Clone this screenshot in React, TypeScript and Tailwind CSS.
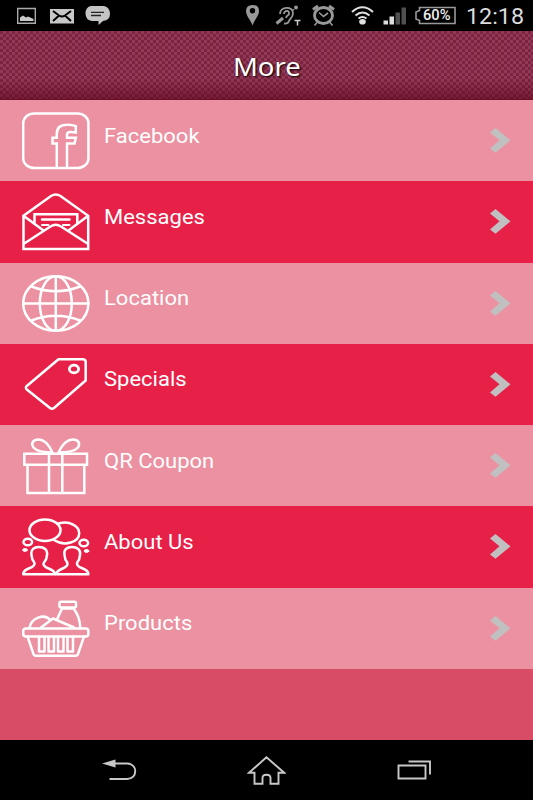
import React from 'react';

const iconProps = {
  fill: 'none',
  stroke: '#fff',
  strokeWidth: 2.5,
  strokeLinejoin: 'round' as const,
  strokeLinecap: 'round' as const,
};

// All row icons share a 68x58 canvas
function Icon({ children }: { children: React.ReactNode }) {
  return (
    <svg className="w-[68px] h-[58px] shrink-0" viewBox="0 0 68 58" {...iconProps}>
      {children}
    </svg>
  );
}

const FacebookIcon = () => (
  <Icon>
    <rect x="1.2" y="1.4" width="65.2" height="54.6" rx="11" ry="9.5" />
    <path strokeLinejoin="miter" d="M34.8 55.5V31.5H30.5V25.8H34.8V22C34.8 15.500 39 12.800 45 12.800Q49.500 12.500 53.800 14.200V20.500C49 19.800 45 19.500 45 22.500V25.800H53.800L52.500 31.500H45V55.500" />
  </Icon>
);

const MessagesIcon = () => (
  <Icon>
    <path strokeLinejoin="miter" d="M1.5 22.8V56H66.2V22.8L38.5 3Q33.7.2 29 3L1.5 22.8L21.500 37.500M66.2 22.8L46.500 37.500M1.5 51L28.5 33.500Q33.7 30 39 33.500L66.2 51" />
    <path strokeLinejoin="miter" d="M12.5 29.5V21.3H55.3V29.5M20 26.5H47.500" />
    <path strokeWidth="2" d="M20 32H26.500M41 32H47.500" />
  </Icon>
);

const LocationIcon = () => (
  <Icon>
    <ellipse cx="33.8" cy="28.5" rx="32.6" ry="27.3" />
    <ellipse cx="33.8" cy="28.5" rx="16" ry="27.3" />
    <path d="M33.8 1.2V55.8M1.2 28.5H66.4M9.500 11.500Q33.8 21 58 11.500M9.500 45.500Q33.8 36 58 45.500" />
  </Icon>
);

const SpecialsIcon = () => (
  <Icon>
    <path d="M36.5 3.3H60.500Q63.7 3.3 63.7 6V24.500L32 52Q30 53.500 28 52L4.8 33.500Q3 31.700 4.8 30Z" />
    <ellipse cx="52" cy="13" rx="4.6" ry="3.9" strokeWidth="2.800" />
  </Icon>
);

const CouponIcon = () => (
  <Icon>
    <path strokeLinejoin="miter" d="M2.3 16.8H65V27.8H2.3ZM5.500 27.8V56H62.300V27.8M27 16.8V56M40.300 16.8V56" />
    <path d="M30.5 15.5C27 8 22 2.5 16.500 2.5C11 2.5 8.500 6.500 11.500 10.500C14.500 14 21 15.500 30.500 15.500ZM36.500 15.500C40 8 45.500 2.500 51 2.500C56.500 2.500 58.500 6.500 56 10.500C53 14 46.500 15.500 36.500 15.500Z" />
  </Icon>
);

const AboutIcon = () => (
  <Icon>
    <ellipse cx="23" cy="12.200" rx="15.500" ry="10.700" />
    <path d="M36.500 5.500C48 2.500 57.200 8 57.200 15.300C57.200 24 43 29 32 22" />
    <ellipse cx="5.800" cy="24" rx="4.300" ry="3.300" />
    <ellipse cx="61.800" cy="25" rx="4.300" ry="3.300" />
    <ellipse cx="3" cy="32" rx="2.300" ry="1.400" fill="#fff" strokeWidth="1" />
    <ellipse cx="64.500" cy="33" rx="2.300" ry="1.400" fill="#fff" strokeWidth="1" />
    <path d="M1.200 56.300C1.200 49 12.500 51.500 12.500 45.500C12.500 43 10 43 10 39.500L9.500 37C8.500 31.500 12 29 17 29C22 29 26 31.500 25 37L24.500 39.500C24.500 43 21.500 43 21.500 46C21.500 51 32.500 50 33.200 56.300Z" />
    <path d="M34.200 56.300C35 50 45.500 51 45.500 46C45.500 43 43 43 43 39.500L42.500 37C41.500 31.500 45 29 50 29C55 29 59 31.500 58 37L57.500 39.500C57.500 43 55 43 55 45.500C55 51.500 66.400 49 66.400 56.300Z" />
  </Icon>
);

const ProductsIcon = () => (
  <Icon>
    <rect x="1.300" y="28.500" width="65" height="8" rx="2.500" />
    <path d="M5.500 36.500L11.500 54Q12 55.800 14 55.800H53.500Q55.500 55.800 56 54L62 36.500M7.500 28C9 18 22 13 28.500 20M19 27.500L31 18.500L52 27.500M35 19.500L40 8.500H51.500C56 14 58 20 58.300 28" />
    <rect x="37.500" y="1.700" width="16.500" height="5.800" rx="1.500" />
    <path d="M17 37V51.500H22.500V37M26.500 37V51.500H32V37M36 37V51.500H41.500V37M45.500 37V51.500H51V37" />
  </Icon>
);

const items = [
  { label: 'Facebook', icon: FacebookIcon },
  { label: 'Messages', icon: MessagesIcon },
  { label: 'Location', icon: LocationIcon },
  { label: 'Specials', icon: SpecialsIcon },
  { label: 'QR Coupon', icon: CouponIcon },
  { label: 'About Us', icon: AboutIcon },
  { label: 'Products', icon: ProductsIcon },
];

function StatusBar() {
  return (
    <div className="h-[31px] bg-black flex items-center justify-between pl-4 pr-[9px]">
      <svg className="w-[96px] h-[31px]" viewBox="16 0 96 31">
        <path d="M17.700 8.500H35.300V23.300H17.700Z" fill="none" stroke="#aaa" strokeWidth="1.400" />
        <path d="M20 21V17.500L23 15.500L26 17.500L28 16.500L33.500 19V21Z" fill="#c8c8c8" />
        <path d="M50 9H74V23.500H50Z" fill="#c8c8c8" />
        <path d="M53 11L59 15.500Q62 17.500 65 15.500L71 11M53 21L58.500 16M71 21L65.500 16" fill="none" stroke="#000" strokeWidth="2" />
        <path d="M91 6H104Q110 7.500 110 14Q110 20 103 21L98.500 25V21H92Q85.500 20 85.500 13.500Q85.500 7 91 6Z" fill="#c4c4c4" />
        <path d="M91 12.300H104M91 15.500H101" stroke="#222" strokeWidth="1.300" />
      </svg>
      <svg className="w-[284px] h-[31px]" viewBox="240 0 284 31" fill="none" stroke="#999">
        <path fill="#999" stroke="none" fillRule="evenodd" d="M252.500 25.500C250.500 19.500 246 16 246 11Q246 5 252.500 5Q259 5 259 11C259 16 254.500 19.500 252.500 25.500ZM252.500 8A2.700 2.700 0 1 0 252.500 13.400A2.700 2.700 0 1 0 252.500 8Z" />
        <path strokeWidth="1.800" d="M280 14C280 6 293 6 293 13C293 18 290 18 289 21Q288 24 284 23.500M284 14C284 9.500 290 10 289 14C288 16 286 16 286 18" />
        <path strokeWidth="3" d="M276.500 23.500L283 18" />
        <circle cx="296" cy="7.500" r="1.900" fill="#999" stroke="none" />
        <path strokeWidth="1.300" d="M292 11L294 9.300" />
        <path stroke="#ccc" strokeWidth="1.500" d="M294.500 20.500H300.500M297.500 20.500V25.500" />
        <ellipse cx="323.500" cy="15.500" rx="9" ry="8" strokeWidth="2.800" />
        <path strokeWidth="1.600" d="M319 12.500L323.500 16.500L328 13M317 22.500L314.500 25.500M330 22.500L332.500 25.500" />
        <path strokeWidth="3" d="M313 9.500L318 6M329 6L334 9.500" />
        <g stroke="#e0e0e0" strokeWidth="2">
          <path d="M352 12Q362.500 2.500 373 12M355.500 15.500Q362.500 9.500 369.500 15.500M358.500 18.500Q362.500 15.500 366.500 18.500" />
          <ellipse cx="362.500" cy="21.700" rx="3.300" ry="2.800" fill="#e0e0e0" stroke="none" />
        </g>
        <g stroke="none">
          <path fill="#ddd" d="M383.500 20.500H388V24.500H383.500ZM389.500 16.500H394V24.500H389.500Z" />
          <path fill="#505050" d="M395.500 12.500H400V24.500H395.500ZM401.500 7.500H406V24.500H401.500Z" />
        </g>
        <path stroke="#999" strokeWidth="1.600" d="M419.500 7.500H455V23.500H419.500V20.500L416 19V12L419.500 10.500Z" />
        <text x="423" y="20.300" textLength="27.500" lengthAdjust="spacingAndGlyphs" fill="#eee" stroke="none" className="font-[Roboto,sans-serif] text-[14px] font-medium">60%</text>
        <text x="466" y="23.700" textLength="58" lengthAdjust="spacingAndGlyphs" fill="#ddd" stroke="none" className="font-[Roboto,sans-serif] text-[22px]">12:18</text>
      </svg>
    </div>
  );
}

function NavBar() {
  return (
    <div className="h-[60px] bg-black flex items-center justify-between pl-[102px] pr-[101px]">
      <svg className="w-[35px] h-[30px]" viewBox="0 0 35 30" fill="none" stroke="#c8c8c8" strokeWidth="1.900">
        <path d="M13 8.500H25C36 8.500 36 24 25 24H7.500" />
        <path d="M0 8.500L13.500 4.500V12.500Z" fill="#c8c8c8" stroke="none" />
      </svg>
      <svg className="w-[39px] h-[30px] -ml-0.5" viewBox="0 0 39 30" fill="none" stroke="#c8c8c8" strokeWidth="1.900">
        <path d="M19.500 2.300L2 17.800H7.500V28.800H15.500V23Q15.500 19.700 19.500 19.700Q23.500 19.700 23.500 23V28.800H31.500V17.800H37.200Z" />
      </svg>
      <svg className="w-[35px] h-[30px]" viewBox="0 0 35 30" fill="none" stroke="#c8c8c8" strokeWidth="1.900">
        <path d="M1.500 10.500H28.500V23.500H1.500ZM11.500 6.500H33V19.500" />
      </svg>
    </div>
  );
}

export default function App() {
  return (
    <div className="w-[533px] h-[800px] flex flex-col overflow-hidden bg-[#d94c66] font-[Roboto,sans-serif]">
      <StatusBar />
      {/* Header with woven texture */}
      <header className="h-[69px] shrink-0 flex items-center justify-center border-b border-[#6b0f28] bg-[linear-gradient(to_bottom,transparent_70%,rgba(90,0,25,0.5)),repeating-conic-gradient(#913a55_0_25%,#7c2341_0_50%)] bg-size-[auto,6px_6px]">
        <h1 className="font-['Noto_Sans',sans-serif] text-[25px] leading-none text-white scale-x-[1.1] pt-0.5 [text-shadow:1px_1px_2px_#000]">More</h1>
      </header>

      <ul className="h-[569px] shrink-0 flex flex-col">
        {items.map(({ label, icon: ItemIcon }) => (
          <li key={label} className="flex-1 flex px-[22px] text-white odd:bg-[#eb91a1] even:bg-[#e72048]">
            <div className="pt-3">
              <ItemIcon />
            </div>
            <span className="flex-1 pl-[14px] pt-[23.5px] text-[20px] leading-6">
              <span className="inline-block origin-left scale-x-[1.1]">{label}</span>
            </span>
            <svg className="w-[22px] h-[26px] mt-[27px]" viewBox="0 0 22 26" fill="#c0c0c0">
              <path d="M1 5.500L6.500 1L21.500 13.300L6.500 25.700L1 21.500L10.500 13.300Z" />
            </svg>
          </li>
        ))}
      </ul>

      <div className="flex-1" />
      <NavBar />
    </div>
  );
}
